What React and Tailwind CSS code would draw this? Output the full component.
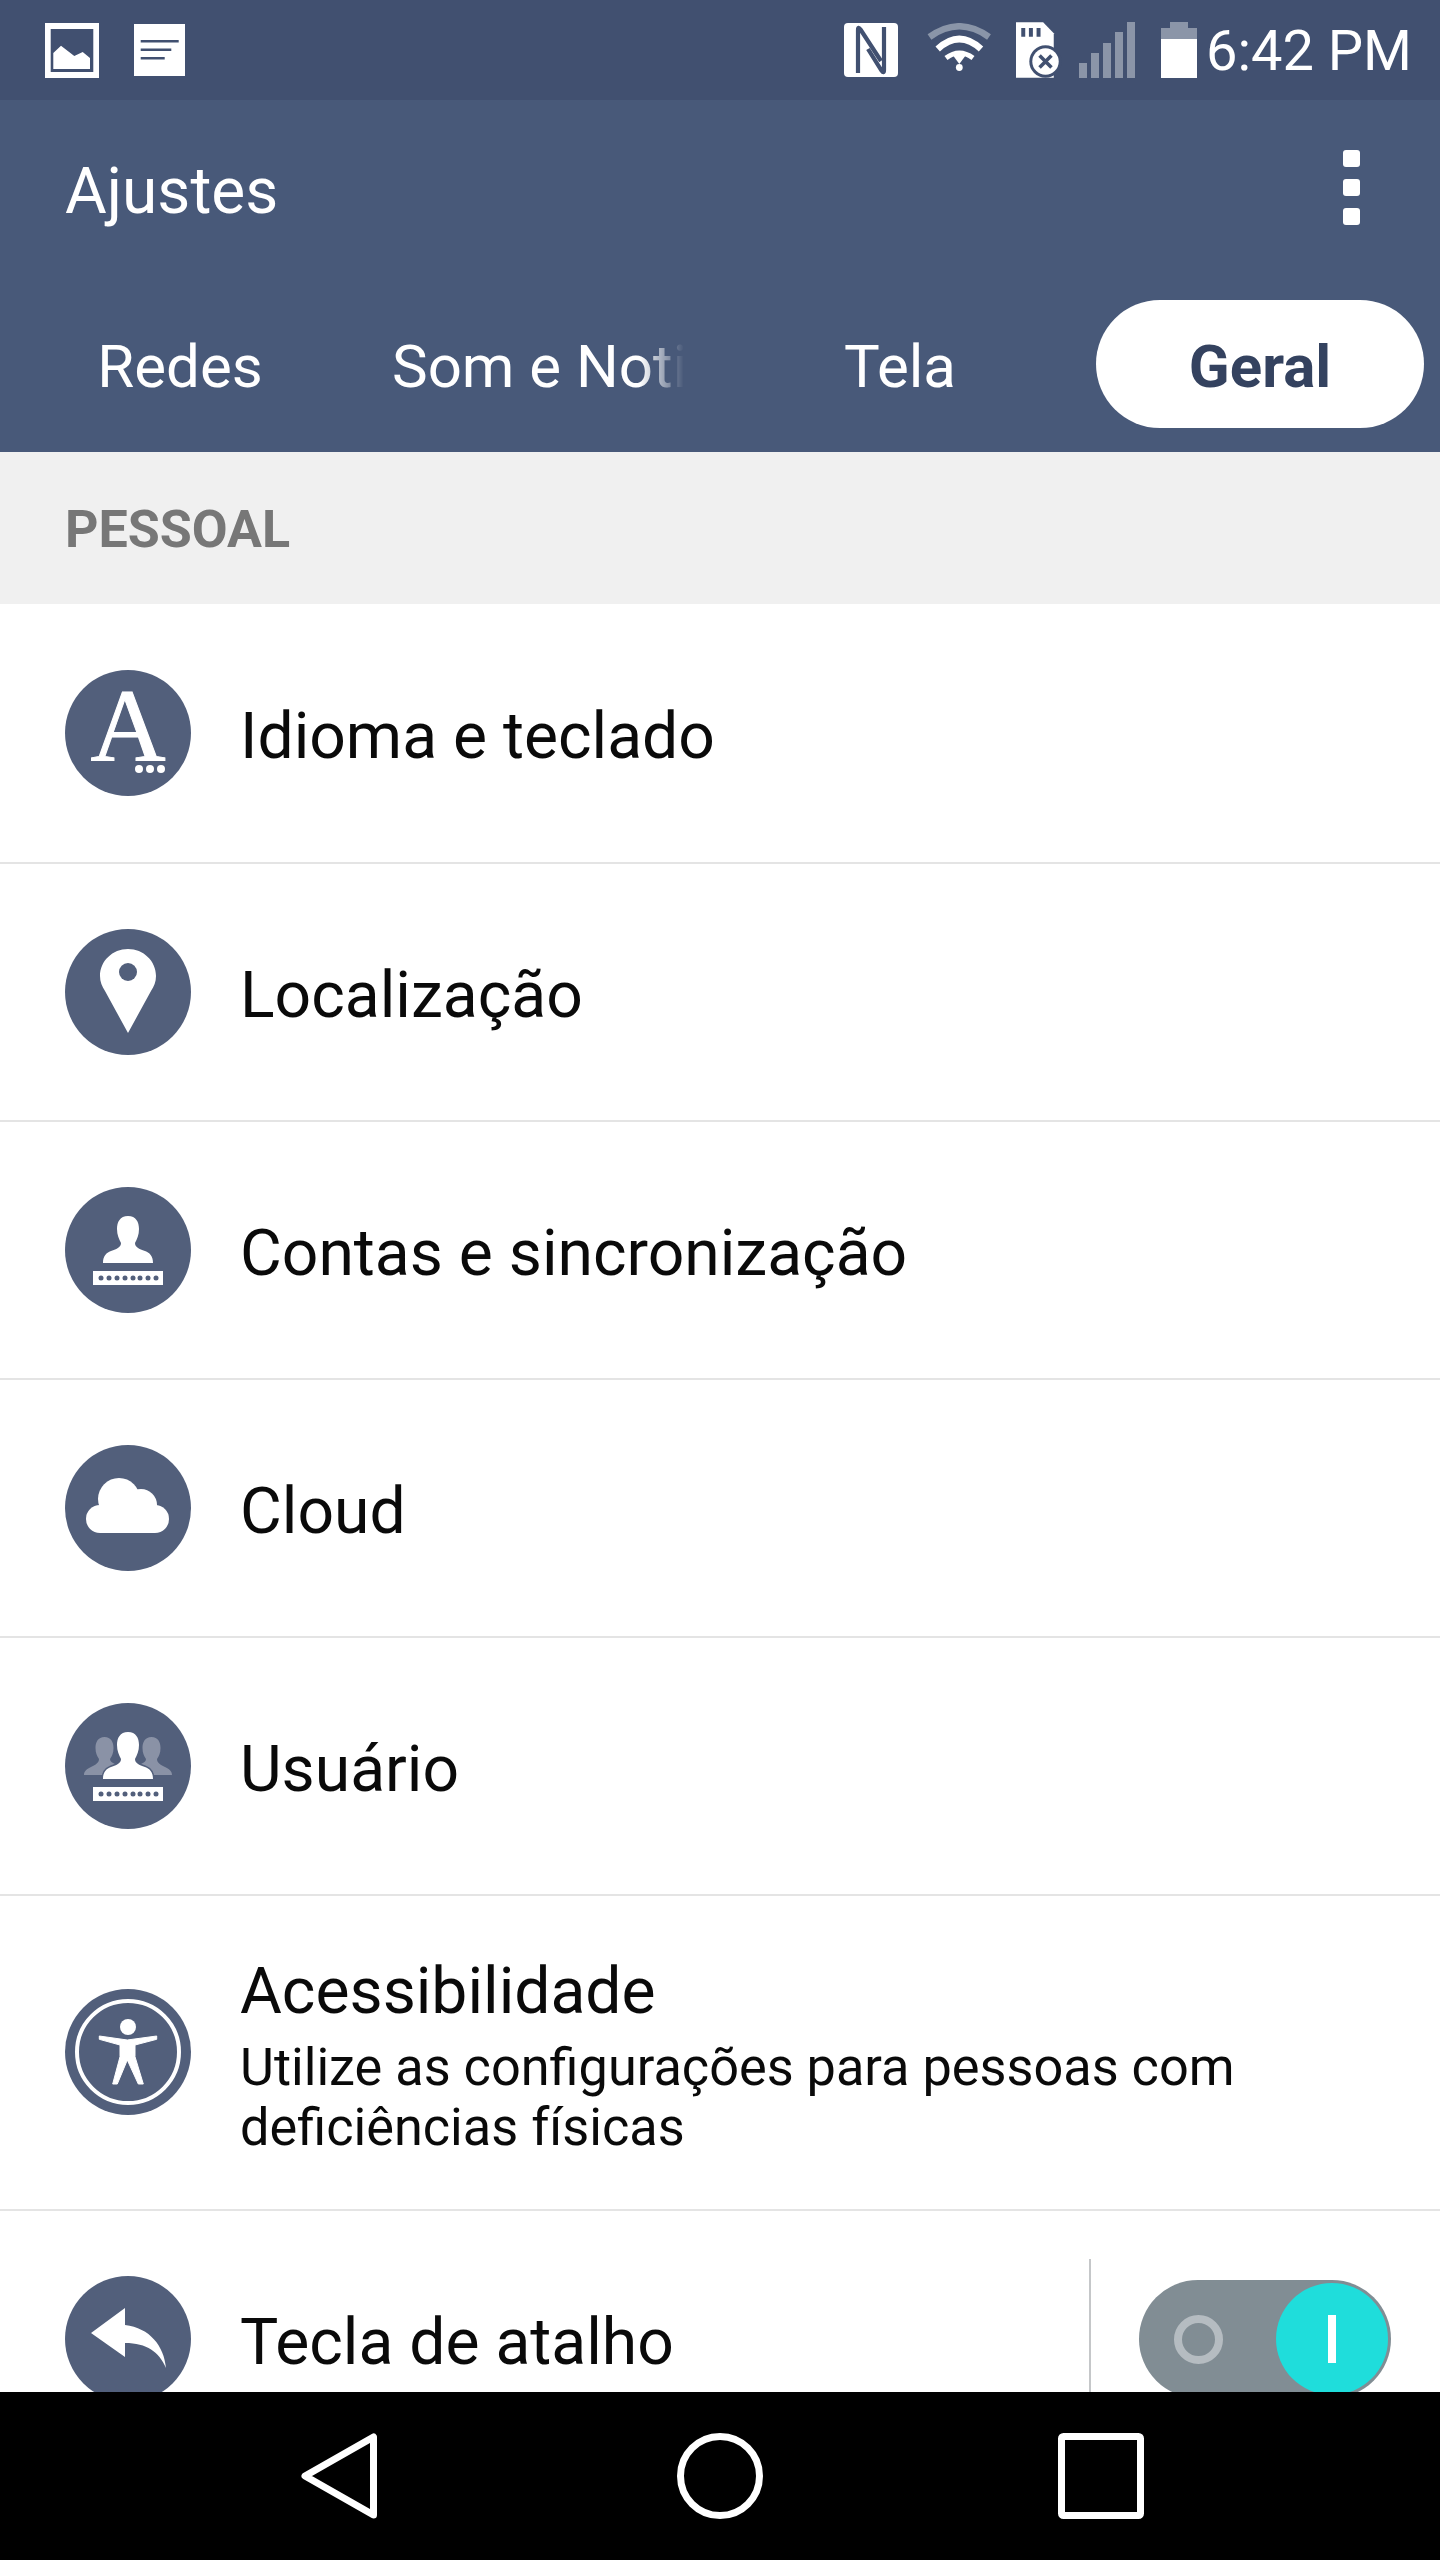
const Circle = ({ children, className = "" }) => (
  <svg viewBox="0 0 126 126" className={`w-[126px] h-[126px] shrink-0 ${className}`}>
    <circle cx="63" cy="63" r="63" fill="#525f7b" />
    {children}
  </svg>
);

const PERSON = "M63 29C55 29 52 35 52 42C52 48 54 52 56 56C56 60 52 62 46 64C41 66 38 69 38 76L88 76C88 69 85 66 80 64C74 62 70 60 70 56C72 52 74 48 74 42C74 35 71 29 63 29Z";

const Bar = () => (
  <g>
    <rect x="28" y="84" width="70" height="14" fill="#fff" />
    {[36, 44, 52, 60, 68, 75, 83, 91].map((x) => (
      <circle key={x} cx={x} cy="91" r="2.5" fill="#525f7b" />
    ))}
  </g>
);

const LangIcon = () => (
  <Circle className="overflow-visible">
    <text x="63" y="91" textAnchor="middle" fontSize="104" fill="#fff" stroke="#fff" strokeWidth="1" fontFamily="'Liberation Serif', serif">A</text>
    {[74, 85, 96].map((x) => <circle key={x} cx={x} cy="99" r="4" fill="#fff" />)}
  </Circle>
);

const PinIcon = () => (
  <Circle>
    <path d="M63 20C47.5 20 35 32 35 47C35 53 37 57 40 62L63 104L86 62C89 57 91 53 91 47C91 32 78.5 20 63 20Z" fill="#fff" />
    <circle cx="63" cy="43" r="9" fill="#525f7b" />
  </Circle>
);

const AccountIcon = () => (
  <Circle>
    <path d={PERSON} fill="#fff" />
    <Bar />
  </Circle>
);

const CloudIcon = () => (
  <Circle>
    <g fill="#fff">
      <circle cx="54" cy="54" r="21" />
      <circle cx="76" cy="60" r="16" />
      <rect x="21" y="60" width="83" height="28" rx="14" />
    </g>
  </Circle>
);

const UsersIcon = () => (
  <Circle>
    <g fill="#8a92a6">
      <path d="M39.5 34C33 34 30.5 39 30.5 45C30.5 50 32 53 34 56C34 60 30 62 26 64C22 66 19 68 19 72L60 72L60 64C52 62 45 60 45 56C47 53 48.5 50 48.5 45C48.5 39 46 34 39.5 34Z" />
      <path d="M86.5 34C93 34 95.5 39 95.5 45C95.5 50 94 53 92 56C92 60 96 62 100 64C104 66 107 68 107 72L66 72L66 64C74 62 81 60 81 56C79 53 77.5 50 77.5 45C77.5 39 80 34 86.5 34Z" />
    </g>
    <path d={PERSON} fill="#fff" stroke="#525f7b" strokeWidth="3" paintOrder="stroke" />
    <Bar />
  </Circle>
);

const AccessIcon = () => (
  <Circle className="mb-[2px]">
    <circle cx="63" cy="63" r="51" fill="none" stroke="#fff" strokeWidth="4" />
    <circle cx="63" cy="38" r="8" fill="#fff" />
    <path d="M34.3 47L62.3 51L91.7 47L91.7 50.3L70 56L70 67.7L78.3 95L73.3 95L62.3 71L52.3 95L47.7 95L55 67.7L55 56L34.3 50.3Z" fill="#fff" stroke="#fff" strokeWidth="1" strokeLinejoin="round" />
  </Circle>
);

const ReplyIcon = () => (
  <Circle>
    <path d="M26 57L60 32L60 49C85 52 99 70 101 92C94 76 82 67 60 67L60 81Z" fill="#fff" />
  </Circle>
);

const Row = ({ icon, children, first }) => (
  <div className={`flex items-center ${first ? "h-[260px]" : "h-[258px]"} shrink-0 pl-[65px] gap-[49px] border-b-2 border-[#e4e4e4]`}>
    {icon}
    {children}
  </div>
);

const Label = ({ children }) => (
  <span className="mt-[6px] text-[64.2px] leading-none text-[#0a0a0a]">{children}</span>
);

export default function App() {
  return (
    <div className="w-[1440px] h-[2560px] flex flex-col overflow-hidden bg-white font-['Roboto',sans-serif]">
      {/* status bar */}
      <div className="h-[100px] shrink-0 bg-[#415070] flex items-center justify-between pl-[45px] pr-[28px]">
        <div className="flex items-center gap-[35px]">
          <svg width="54" height="55" viewBox="0 0 54 55">
            <path fillRule="evenodd" d="M0 0H54V55H0ZM5.7 6V49H48.3V6Z" fill="#fff" />
            <path d="M8.3 46V30L16 22.7L29.3 33L37.7 29L45 35V46Z" fill="#fff" />
          </svg>
          <svg width="51" height="52" viewBox="0 0 51 52">
            <rect width="51" height="52" fill="#fff" />
            <path d="M6.7 17.3H44.7M6.7 25.7H37.3M6.7 34.3H30.7" stroke="#415070" strokeWidth="2.6" />
          </svg>
        </div>
        <div className="flex items-center">
          <svg width="54" height="54" viewBox="0 0 54 54">
            <rect width="54" height="54" rx="4" fill="#fff" />
            <path d="M14 50V7Q14 3 16.5 6.5L37 38" fill="none" stroke="#415070" strokeWidth="4.2" />
            <path d="M40 4V47Q40 51 37.5 47.5L24 26" fill="none" stroke="#415070" strokeWidth="4.2" />
          </svg>
          <svg width="67" height="49" viewBox="0 0 67 49" className="ml-[28px] -translate-y-[3px]">
            <path d="M3.5 14Q33.3 -7.4 63 14" fill="none" stroke="#8a95a8" strokeWidth="6.5" />
            <path d="M11.7 26Q33.3 6 55 26" fill="none" stroke="#fff" strokeWidth="6.5" />
            <path d="M20 35Q33.3 25 47 35" fill="none" stroke="#fff" strokeWidth="5" />
            <path d="M26 35L30 41M41 35L37 41" stroke="#415070" strokeWidth="2" />
            <path d="M26.7 32L40 32L33.3 41Z" fill="#fff" />
            <circle cx="33.3" cy="44.5" r="3.4" fill="#fff" />
          </svg>
          <svg width="46" height="56" viewBox="0 0 46.3 55.7" className="ml-[23px]">
            <path d="M0 0H27.3L38 11V55.7H0Z" fill="#fff" />
            <path d="M5.3 5.7h4v8.7h-4ZM13 5.7h4v8.7h-4ZM20.7 5.7h4v8.7h-4Z" fill="#415070" />
            <circle cx="29.7" cy="39.4" r="16.3" fill="#415070" />
            <circle cx="29.7" cy="39.4" r="13.3" fill="#fff" />
            <path d="M23.7 33.4L35.7 45.4M35.7 33.4L23.7 45.4" stroke="#415070" strokeWidth="3.6" />
          </svg>
          <svg width="56" height="56" viewBox="0 0 56 56" className="ml-[17px]">
            <g fill="#8b95a8">
              <rect x="0" y="41" width="8" height="15" />
              <rect x="12" y="31" width="8" height="25" />
              <rect x="24" y="21" width="8" height="35" />
              <rect x="36" y="10" width="8" height="46" />
              <rect x="48" y="0" width="8" height="56" />
            </g>
          </svg>
          <svg width="36" height="56" viewBox="0 0 36 56" className="ml-[26px]">
            <path d="M9 0H27V6H36V17H0V6H9Z" fill="#8b95a8" />
            <rect y="17" width="36" height="39" fill="#fff" />
          </svg>
          <span className="ml-[9px] mt-[2px] text-[56px] leading-none font-normal text-white whitespace-nowrap">6:42 PM</span>
        </div>
      </div>

      {/* header */}
      <div className="shrink-0 bg-[#485979]">
        <div className="h-[180px] flex items-center justify-between pl-[65px] pr-[80px]">
          <span className="mt-[4px] text-[64px] leading-none text-white">Ajustes</span>
          <div className="mb-[6px] flex flex-col gap-[12px]">
            <div className="w-[17px] h-[17px] rounded-[3px] bg-white" />
            <div className="w-[17px] h-[17px] rounded-[3px] bg-white" />
            <div className="w-[17px] h-[17px] rounded-[3px] bg-white" />
          </div>
        </div>
        <div className="h-[172px] grid grid-cols-4 items-center pb-[4px] text-[60px] leading-none text-white">
          <div className="text-center pt-[6px]">Redes</div>
          <div className="ml-[32px] pt-[6px] w-[292px] whitespace-nowrap [mask-image:linear-gradient(to_right,black_85%,transparent_100%)]">Som e Noti</div>
          <div className="text-center pt-[6px]">Tela</div>
          <div className="ml-[16px] pt-[6px] w-[328px] h-[128px] rounded-full bg-white flex items-center justify-center font-bold text-[#34425f]">Geral</div>
        </div>
      </div>

      {/* list */}
      <div className="flex-1 min-h-0 flex flex-col">
        <div className="h-[152px] shrink-0 pt-[3px] bg-[#f0f0f0] flex items-center pl-[65px] text-[52px] leading-none font-bold text-[#777777]">PESSOAL</div>
        <Row first icon={<LangIcon />}><Label>Idioma e teclado</Label></Row>
        <Row icon={<PinIcon />}><Label>Localização</Label></Row>
        <Row icon={<AccountIcon />}><Label>Contas e sincronização</Label></Row>
        <Row icon={<CloudIcon />}><Label>Cloud</Label></Row>
        <Row icon={<UsersIcon />}><Label>Usuário</Label></Row>
        <div className="flex items-center h-[315px] shrink-0 pl-[65px] gap-[49px] border-b-2 border-[#e4e4e4]">
          <AccessIcon />
          <div className="flex flex-col mb-[4px]">
            <span className="text-[64.2px] leading-[94px] text-[#0a0a0a]">Acessibilidade</span>
            <span className="text-[52.25px] leading-[60px] text-[#0a0a0a]">Utilize as configurações para pessoas com<br />deficiências físicas</span>
          </div>
        </div>
        <div className="flex items-center h-[256px] shrink-0 pl-[65px]">
          <ReplyIcon />
          <span className="ml-[49px] mt-[6px] text-[64.2px] leading-none text-[#0a0a0a]">Tecla de atalho</span>
          <div className="ml-auto w-[2px] h-[160px] bg-[#c5c7c9]" />
          <div className="ml-[48px] mr-[49px] w-[252px] h-[118px] rounded-full bg-[#818d94] flex items-center justify-between pl-[35px] pr-[3px]">
            <div className="w-[49px] h-[49px] rounded-full border-[8px] border-[#b5bcc1]" />
            <div className="w-[112px] h-[112px] rounded-full bg-[#1fdddb] flex items-center justify-center">
              <div className="w-[8px] h-[48px] bg-white" />
            </div>
          </div>
        </div>
      </div>

      {/* nav */}
      <div className="h-[168px] shrink-0 bg-black flex items-center justify-center gap-[295px]">
        <svg width="86" height="86" viewBox="0 0 86 86">
          <path d="M9 43L77.5 4V82Z" fill="none" stroke="#fff" strokeWidth="7" strokeLinejoin="round" />
        </svg>
        <svg width="86" height="86" viewBox="0 0 86 86">
          <circle cx="43" cy="43" r="39.5" fill="none" stroke="#fff" strokeWidth="7" />
        </svg>
        <svg width="86" height="86" viewBox="0 0 86 86">
          <rect x="3.5" y="3.5" width="79" height="79" rx="2" fill="none" stroke="#fff" strokeWidth="7" />
        </svg>
      </div>
    </div>
  );
}
